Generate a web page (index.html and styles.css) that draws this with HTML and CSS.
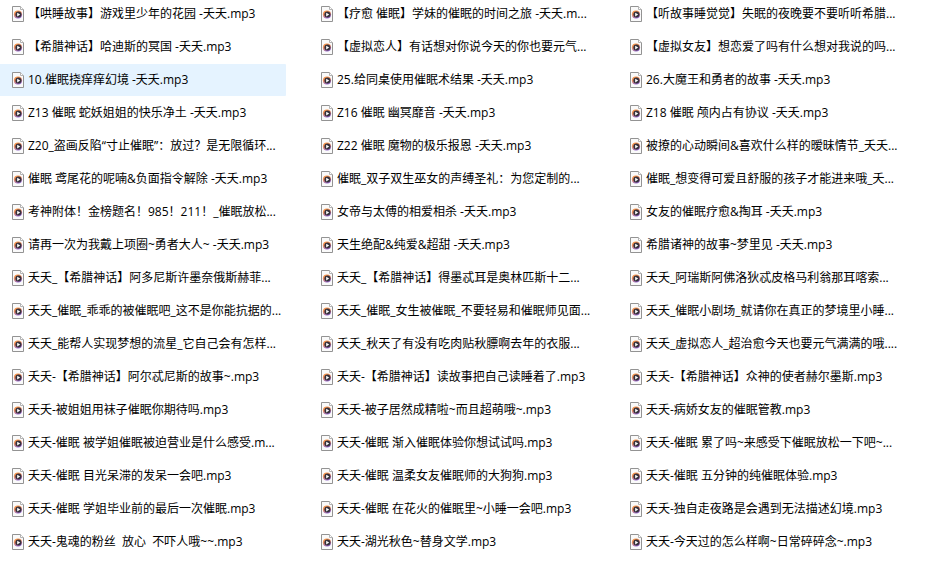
FILE: index.html
```html
<!DOCTYPE html>
<html lang="zh-CN">
<head>
<meta charset="utf-8">
<title>mp3</title>
<link rel="stylesheet" href="styles.css">
</head>
<body>
<svg class="defs" aria-hidden="true">
  <defs>
    <linearGradient id="ring" x1="0" y1="0" x2="0.4" y2="1">
      <stop offset="0" stop-color="#ff9a3c"/>
      <stop offset="0.5" stop-color="#e58a62"/>
      <stop offset="1" stop-color="#8f63c8"/>
    </linearGradient>
    <symbol id="audio" viewBox="0 0 12 16">
      <path d="M.5 .5H8.5L11.5 3.5V15.5H.5Z" fill="#fafafa" stroke="#939393"/>
      <path d="M8.5 .5V3.5H11.5" fill="#fff" stroke="#b4b4b4"/>
      <circle cx="6" cy="8.5" r="4.1" fill="url(#ring)"/>
      <circle cx="6.4" cy="8.6" r="3" fill="#34303a"/>
      <path d="M5.2 6.7V10.5L8.2 8.6Z" fill="#fff"/>
    </symbol>
  </defs>
</svg>
<main>
<ul class="files">
<li class="file"><svg class="icon"><use href="#audio"/></svg><span class="name">【哄睡故事】游戏里少年的花园 -夭夭.mp3</span></li>
<li class="file"><svg class="icon"><use href="#audio"/></svg><span class="name">【疗愈 催眠】学妹的催眠的时间之旅 -夭夭.m...</span></li>
<li class="file"><svg class="icon"><use href="#audio"/></svg><span class="name">【听故事睡觉觉】失眠的夜晚要不要听听希腊...</span></li>
<li class="file"><svg class="icon"><use href="#audio"/></svg><span class="name">【希腊神话】哈迪斯的冥国 -夭夭.mp3</span></li>
<li class="file"><svg class="icon"><use href="#audio"/></svg><span class="name">【虚拟恋人】有话想对你说今天的你也要元气...</span></li>
<li class="file"><svg class="icon"><use href="#audio"/></svg><span class="name">【虚拟女友】想恋爱了吗有什么想对我说的吗...</span></li>
<li class="file selected"><svg class="icon"><use href="#audio"/></svg><span class="name">10.催眠挠痒痒幻境 -夭夭.mp3</span></li>
<li class="file"><svg class="icon"><use href="#audio"/></svg><span class="name">25.给同桌使用催眠术结果 -夭夭.mp3</span></li>
<li class="file"><svg class="icon"><use href="#audio"/></svg><span class="name">26.大魔王和勇者的故事 -夭夭.mp3</span></li>
<li class="file"><svg class="icon"><use href="#audio"/></svg><span class="name">Z13 催眠 蛇妖姐姐的快乐净土 -夭夭.mp3</span></li>
<li class="file"><svg class="icon"><use href="#audio"/></svg><span class="name">Z16 催眠 幽冥靡音 -夭夭.mp3</span></li>
<li class="file"><svg class="icon"><use href="#audio"/></svg><span class="name">Z18 催眠 颅内占有协议 -夭夭.mp3</span></li>
<li class="file"><svg class="icon"><use href="#audio"/></svg><span class="name">Z20_盗画反陷“寸止催眠”：放过？是无限循环...</span></li>
<li class="file"><svg class="icon"><use href="#audio"/></svg><span class="name">Z22 催眠 魔物的极乐报恩 -夭夭.mp3</span></li>
<li class="file"><svg class="icon"><use href="#audio"/></svg><span class="name">被撩的心动瞬间&amp;喜欢什么样的暧昧情节_夭夭...</span></li>
<li class="file"><svg class="icon"><use href="#audio"/></svg><span class="name">催眠 鸢尾花的呢喃&amp;负面指令解除 -夭夭.mp3</span></li>
<li class="file"><svg class="icon"><use href="#audio"/></svg><span class="name">催眠_双子双生巫女的声缚圣礼：为您定制的...</span></li>
<li class="file"><svg class="icon"><use href="#audio"/></svg><span class="name">催眠_想变得可爱且舒服的孩子才能进来哦_夭...</span></li>
<li class="file"><svg class="icon"><use href="#audio"/></svg><span class="name">考神附体！金榜题名！985！211！_催眠放松...</span></li>
<li class="file"><svg class="icon"><use href="#audio"/></svg><span class="name">女帝与太傅的相爱相杀 -夭夭.mp3</span></li>
<li class="file"><svg class="icon"><use href="#audio"/></svg><span class="name">女友的催眠疗愈&amp;掏耳 -夭夭.mp3</span></li>
<li class="file"><svg class="icon"><use href="#audio"/></svg><span class="name">请再一次为我戴上项圈~勇者大人~ -夭夭.mp3</span></li>
<li class="file"><svg class="icon"><use href="#audio"/></svg><span class="name">天生绝配&amp;纯爱&amp;超甜 -夭夭.mp3</span></li>
<li class="file"><svg class="icon"><use href="#audio"/></svg><span class="name">希腊诸神的故事~梦里见 -夭夭.mp3</span></li>
<li class="file"><svg class="icon"><use href="#audio"/></svg><span class="name">夭夭_【希腊神话】阿多尼斯许墨奈俄斯赫菲...</span></li>
<li class="file"><svg class="icon"><use href="#audio"/></svg><span class="name">夭夭_【希腊神话】得墨忒耳是奥林匹斯十二...</span></li>
<li class="file"><svg class="icon"><use href="#audio"/></svg><span class="name">夭夭_阿瑞斯阿佛洛狄忒皮格马利翁那耳喀索...</span></li>
<li class="file"><svg class="icon"><use href="#audio"/></svg><span class="name">夭夭_催眠_乖乖的被催眠吧_这不是你能抗据的...</span></li>
<li class="file"><svg class="icon"><use href="#audio"/></svg><span class="name">夭夭_催眠_女生被催眠_不要轻易和催眠师见面...</span></li>
<li class="file"><svg class="icon"><use href="#audio"/></svg><span class="name">夭夭_催眠小剧场_就请你在真正的梦境里小睡...</span></li>
<li class="file"><svg class="icon"><use href="#audio"/></svg><span class="name">夭夭_能帮人实现梦想的流星_它自己会有怎样...</span></li>
<li class="file"><svg class="icon"><use href="#audio"/></svg><span class="name">夭夭_秋天了有没有吃肉贴秋膘啊去年的衣服...</span></li>
<li class="file"><svg class="icon"><use href="#audio"/></svg><span class="name">夭夭_虚拟恋人_超治愈今天也要元气满满的哦....</span></li>
<li class="file"><svg class="icon"><use href="#audio"/></svg><span class="name">夭夭-【希腊神话】阿尔忒尼斯的故事~.mp3</span></li>
<li class="file"><svg class="icon"><use href="#audio"/></svg><span class="name">夭夭-【希腊神话】读故事把自己读睡着了.mp3</span></li>
<li class="file"><svg class="icon"><use href="#audio"/></svg><span class="name">夭夭-【希腊神话】众神的使者赫尔墨斯.mp3</span></li>
<li class="file"><svg class="icon"><use href="#audio"/></svg><span class="name">夭夭-被姐姐用袜子催眠你期待吗.mp3</span></li>
<li class="file"><svg class="icon"><use href="#audio"/></svg><span class="name">夭夭-被子居然成精啦~而且超萌哦~.mp3</span></li>
<li class="file"><svg class="icon"><use href="#audio"/></svg><span class="name">夭夭-病娇女友的催眠管教.mp3</span></li>
<li class="file"><svg class="icon"><use href="#audio"/></svg><span class="name">夭夭-催眠 被学姐催眠被迫营业是什么感受.m...</span></li>
<li class="file"><svg class="icon"><use href="#audio"/></svg><span class="name">夭夭-催眠 渐入催眠体验你想试试吗.mp3</span></li>
<li class="file"><svg class="icon"><use href="#audio"/></svg><span class="name">夭夭-催眠 累了吗~来感受下催眠放松一下吧~...</span></li>
<li class="file"><svg class="icon"><use href="#audio"/></svg><span class="name">夭夭-催眠 目光呆滞的发呆一会吧.mp3</span></li>
<li class="file"><svg class="icon"><use href="#audio"/></svg><span class="name">夭夭-催眠 温柔女友催眠师的大狗狗.mp3</span></li>
<li class="file"><svg class="icon"><use href="#audio"/></svg><span class="name">夭夭-催眠 五分钟的纯催眠体验.mp3</span></li>
<li class="file"><svg class="icon"><use href="#audio"/></svg><span class="name">夭夭-催眠 学姐毕业前的最后一次催眠.mp3</span></li>
<li class="file"><svg class="icon"><use href="#audio"/></svg><span class="name">夭夭-催眠 在花火的催眠里~小睡一会吧.mp3</span></li>
<li class="file"><svg class="icon"><use href="#audio"/></svg><span class="name">夭夭-独自走夜路是会遇到无法描述幻境.mp3</span></li>
<li class="file"><svg class="icon"><use href="#audio"/></svg><span class="name">夭夭-鬼魂的粉丝  放心  不吓人哦~~.mp3</span></li>
<li class="file"><svg class="icon"><use href="#audio"/></svg><span class="name">夭夭-湖光秋色~替身文学.mp3</span></li>
<li class="file"><svg class="icon"><use href="#audio"/></svg><span class="name">夭夭-今天过的怎么样啊~日常碎碎念~.mp3</span></li>
</ul>
</main>
</body>
</html>
```
FILE: styles.css
```css
body {
  margin: 0;
  background: #fff;
  color: #000;
  font-family: "Open Sans", "Noto Sans CJK SC", sans-serif;
  font-size: 12px;
  line-height: 16px;
  text-spacing-trim: space-all;
}

.defs {
  display: block;
  width: 0;
  height: 0;
}

main {
  overflow: hidden;
}

.files {
  display: grid;
  grid-template-columns: repeat(auto-fill, 286px);
  column-gap: 23px;
  row-gap: 1px;
  margin: -2px 0 0;
  padding: 0;
  list-style: none;
}

.file {
  display: flex;
  align-items: center;
  gap: 4px;
  height: 32px;
  padding-left: 12px;
  border-radius: 0 1px 1px 0;
  box-sizing: border-box;
}

.file.selected {
  background: #e5f3ff;
}

.icon {
  flex: none;
  width: 12px;
  height: 16px;
}

.name {
  white-space: pre;
}
```
